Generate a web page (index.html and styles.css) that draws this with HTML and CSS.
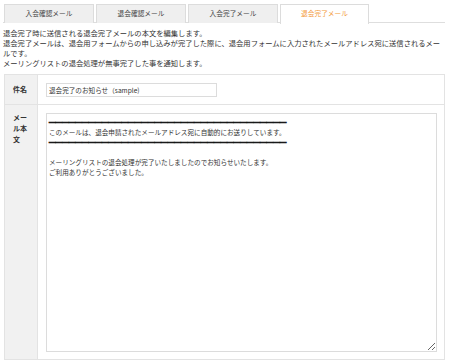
FILE: index.html
```html
<!DOCTYPE html>
<html lang="ja">
<head>
<meta charset="utf-8">
<link rel="stylesheet" href="styles.css">
</head>
<body>
<div class="page">
  <ul class="tabs">
    <li class="tab">入会確認メール</li>
    <li class="tab">退会確認メール</li>
    <li class="tab">入会完了メール</li>
    <li class="tab active">退会完了メール</li>
  </ul>
  <p class="desc">退会完了時に送信される退会完了メールの本文を編集します。<br>退会完了メールは、退会用フォームからの申し込みが完了した際に、退会用フォームに入力されたメールアドレス宛に送信されるメー<br>ルです。<br>メーリングリストの退会処理が無事完了した事を通知します。</p>
  <table class="form">
    <tr class="row-subject">
      <th>件名</th>
      <td><input class="subject" type="text" value="退会完了のお知らせ（sample)"></td>
    </tr>
    <tr class="row-body">
      <th>メール本文</th>
      <td><div class="body" contenteditable="true"><span class="rule">━━━━━━━━━━━━━━━━━━━━━━━━━━━━━━━━━━━━</span>
このメールは、退会申請されたメールアドレス宛に自動的にお送りしています。
<span class="rule">━━━━━━━━━━━━━━━━━━━━━━━━━━━━━━━━━━━━</span>

メーリングリストの退会処理が完了いたしましたのでお知らせいたします。
ご利用ありがとうございました。</div></td>
    </tr>
  </table>
</div>
</body>
</html>
```

FILE: styles.css
```css
* { box-sizing: border-box; }
html, body { margin: 0; padding: 0; background: #fff; }
body {
  font-family: "Noto Sans CJK JP", "Noto Sans", sans-serif;
  color: #333;
  width: 450px;
  height: 364px;
  overflow: hidden;
}
.page {
  padding: 4px 5px 0 3px;
}
.tabs {
  list-style: none;
  margin: 0;
  padding: 0 0 0 1px;
  display: flex;
  gap: 2px;
  height: 19px;
  border-bottom: 1px solid #dedede;
}
.tab {
  width: 90px;
  height: 19px;
  background: #efefef;
  border: 1px solid #dcdcdc;
  border-bottom: none;
  font-size: 6.7px;
  line-height: 17px;
  text-align: center;
  color: #444;
}
.tab.active {
  width: 89px;
  background: #fff;
  color: #f39a3a;
  border-color: #dcdcdc;
  margin-bottom: -1px;
  height: 20px;
}
.desc {
  margin: 5px 0 0 0;
  font-size: 7.3px;
  line-height: 10px;
  white-space: nowrap;
  color: #333;
}
.form {
  margin: 6px 0 0 1px;
  width: 441px;
  border-collapse: collapse;
  border: 1px solid #e3e3e3;
}
.form th, .form td {
  border: 1px solid #e3e3e3;
  padding: 0;
}
.form th {
  width: 34px;
  background: #f1f1f1;
  font-size: 7px;
  line-height: 11px;
  font-weight: bold;
  text-align: left;
  padding: 0 8px 0 8px;
  color: #333;
}
.row-subject { height: 30px; }
.row-subject th { vertical-align: middle; }
.row-subject td { padding: 0 8px 0 8px; vertical-align: middle; }
.row-body th { vertical-align: top; padding-top: 7px; }
.row-body td { padding: 8px 7px 7px 8px; vertical-align: top; }
.subject {
  display: block;
  width: 171px;
  height: 14px;
  border: 1px solid #dcdcdc;
  padding: 0 2px;
  font-family: "Noto Sans CJK JP", "Noto Sans", sans-serif;
  font-size: 6.6px;
  color: #333;
  outline: none;
}
.body {
  width: 391px;
  height: 239px;
  border: 1px solid #dcdcdc;
  padding: 3px 2px;
  margin: 0;
  font-size: 6.6px;
  line-height: 10px;
  color: #333;
  outline: none;
  white-space: pre;
  overflow: hidden;
  resize: both;
}
.rule {
  color: #111;
  -webkit-text-stroke: 0.7px #111;
}
```
